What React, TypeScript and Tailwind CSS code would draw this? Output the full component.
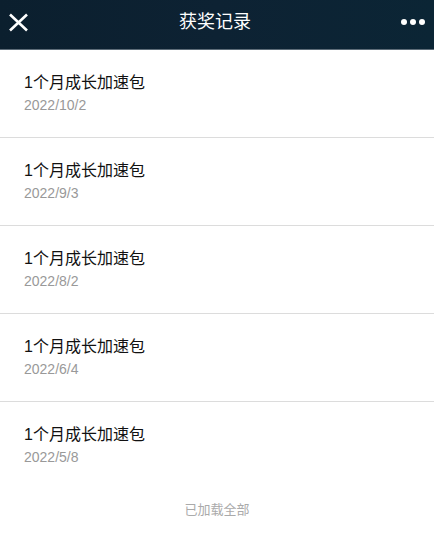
const records = [
  { name: "1个月成长加速包", date: "2022/10/2" },
  { name: "1个月成长加速包", date: "2022/9/3" },
  { name: "1个月成长加速包", date: "2022/8/2" },
  { name: "1个月成长加速包", date: "2022/6/4" },
  { name: "1个月成长加速包", date: "2022/5/8" },
];

export default function App() {
  return (
    <div
      className="min-h-screen w-[434px] bg-white"
      style={{ fontFamily: '"Liberation Sans", "Noto Sans CJK SC", sans-serif' }}
    >
      <header className="flex h-[50px] items-center justify-between border-b border-[#5d6c78] bg-gradient-to-r from-[#0b1f2e] via-[#0d2233] to-[#0b2535] px-[8px]">
        <svg width="21" height="19" viewBox="0 0 21 19" className="mt-[-5px]">
          <path d="M2 1.5 L19 17.5 M19 1.5 L2 17.5" stroke="#fff" strokeWidth="2.6" strokeLinecap="butt" />
        </svg>
        <h1 className="mt-[-5px] text-[18px] text-white">获奖记录</h1>
        <div className="mt-[-5px] flex gap-[3px] pr-[1px]">
          <span className="h-[6px] w-[6px] rounded-full bg-white" />
          <span className="h-[6px] w-[6px] rounded-full bg-white" />
          <span className="h-[6px] w-[6px] rounded-full bg-white" />
        </div>
      </header>

      <ul>
        {records.map((r, i) => (
          <li
            key={i}
            className={`h-[88px] px-[24px] pt-[22px] ${i < records.length - 1 ? "border-b border-[#dcdcdc]" : ""}`}
          >
            <p className="text-[16px] leading-[22px] text-[#111]">{r.name}</p>
            <p className="mt-[1px] text-[14px] leading-[20px] text-[#999]">{r.date}</p>
          </li>
        ))}
      </ul>

      <p className="pt-[11px] text-center text-[13px] leading-[18px] text-[#aaa]">已加载全部</p>
    </div>
  );
}
